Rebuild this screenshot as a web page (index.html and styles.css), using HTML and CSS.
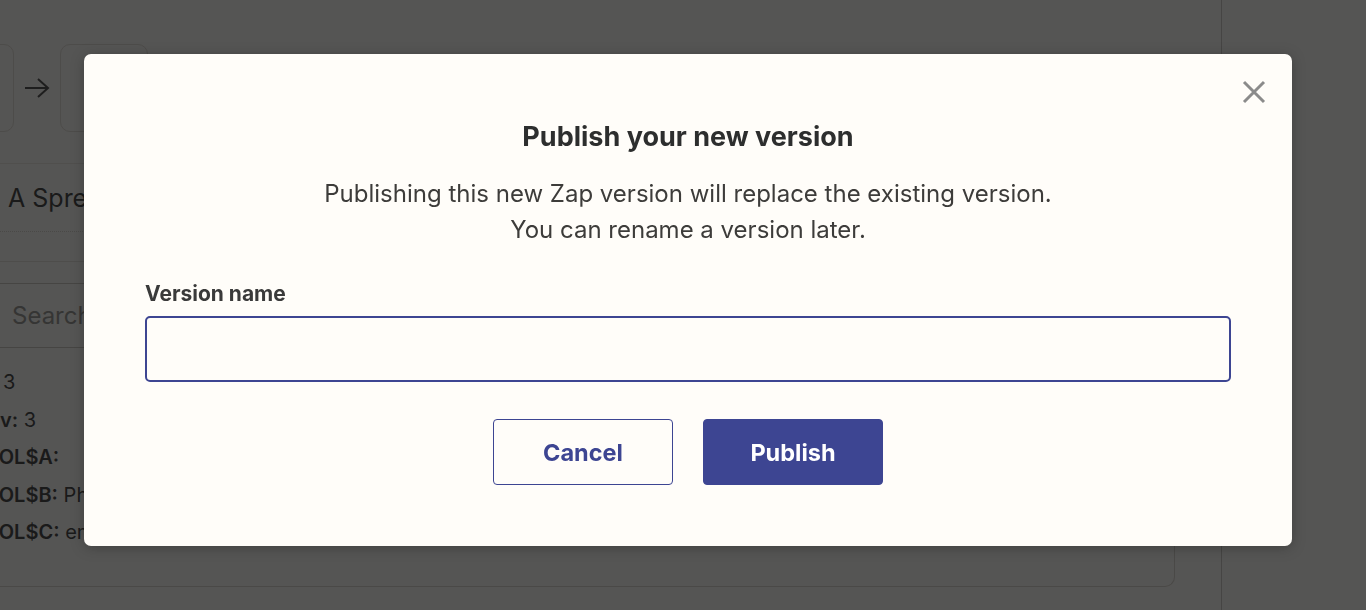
FILE: index.html
```html
<!DOCTYPE html>
<html lang="en">
<head>
<meta charset="utf-8">
<title>Publish your new version</title>
<link rel="stylesheet" href="styles.css">
</head>
<body>
<div class="page">
  <div class="editor">
    <div class="steps">
      <div class="step step-a"></div>
      <svg class="arrow" width="26" height="22" viewBox="0 0 26 22"><path d="M1 11H24M14 2L24 11L14 20" fill="none" stroke="#3a3a3a" stroke-width="2"/></svg>
      <div class="step step-b"></div>
    </div>
    <div class="app-row"><span>A Spreadsheet</span></div>
    <div class="divider"></div>
    <div class="search"><span>Search</span></div>
    <div class="fields">
      <div class="field f1">3</div>
      <div class="field"><b>v:</b> 3</div>
      <div class="field f3"><b>COL$A:</b></div>
      <div class="field f3"><b>COL$B:</b> Phone</div>
      <div class="field f3"><b>COL$C:</b> email</div>
    </div>
  </div>
  <div class="sidebar"></div>
</div>

<div class="overlay"></div>

<div class="modal" role="dialog">
  <button class="close" aria-label="Close">
    <svg width="24" height="24" viewBox="0 0 24 24"><path d="M2 2L22 22M22 2L2 22" stroke="#8b8b8b" stroke-width="3" fill="none"/></svg>
  </button>
  <h1 class="title">Publish your new version</h1>
  <p class="desc">Publishing this new Zap version will replace the existing version.<br>You can rename a version later.</p>
  <label class="label" for="vname">Version name</label>
  <input class="input" id="vname" type="text">
  <div class="actions">
    <button class="btn btn-secondary">Cancel</button>
    <button class="btn btn-primary">Publish</button>
  </div>
</div>
</body>
</html>
```

FILE: styles.css
```css
html, body {
  margin: 0;
  padding: 0;
  height: 100%;
  overflow: hidden;
}
body {
  background: #fffdf9;
  font-family: Inter, "Noto Sans", sans-serif;
  color: #2d2e2e;
}
.page {
  display: flex;
  height: 610px;
}
.editor {
  width: 1221px;
  flex: none;
  border-right: 1px solid #c8c6c0;
  display: flex;
  flex-direction: column;
  overflow: hidden;
}
.sidebar {
  flex: 1;
}
.steps {
  display: flex;
  align-items: center;
  gap: 10px;
  margin-top: 44px;
  margin-left: -60px;
  height: 88px;
}
.step {
  height: 88px;
  border: 1px solid #e0ddd6;
  border-radius: 10px;
  box-sizing: border-box;
}
.step-a { width: 74px; }
.step-b { width: 88px; }
.arrow { flex: none; }
.app-row {
  margin-top: 31px;
  height: 69px;
  border-top: 1px solid #ebe9e3;
  border-bottom: 1px dotted #d8d5ce;
  background: #fffefb;
  display: flex;
  align-items: center;
  font-size: 25px;
  color: #2d2e2e;
  padding-left: 8px;
  box-sizing: border-box;
}
.divider {
  margin-top: 29px;
  border-top: 1px solid #e6e3dc;
}
.search {
  margin-top: 21px;
  height: 65px;
  border-top: 1px solid #c9c6bf;
  border-bottom: 1px solid #c9c6bf;
  box-sizing: border-box;
  display: flex;
  align-items: center;
  padding-left: 12px;
  font-size: 24px;
  color: #8e8c88;
  width: 1170px;
}
.fields {
  margin-top: 16px;
  font-size: 20px;
  line-height: 37.5px;
  color: #2d2e2e;
  border-bottom: 1px solid #d6d3cc;
  border-bottom-right-radius: 10px;
  border-right: 1px solid #d6d3cc;
  width: 1175px;
  height: 223px;
  box-sizing: border-box;
}
.field { white-space: nowrap; }
.field b { font-weight: 600; }
.f1 { padding-left: 3px; }
.f3 { margin-left: -16px; }

.overlay {
  position: fixed;
  inset: 0;
  background: rgba(20, 20, 20, 0.72);
}

.modal {
  position: fixed;
  left: 84px;
  top: 54px;
  width: 1208px;
  height: 492px;
  box-sizing: border-box;
  background: #fffdf9;
  border-radius: 7px;
  box-shadow: 0 2px 14px rgba(0, 0, 0, 0.25);
  padding: 67px 61px 61px;
  display: flex;
  flex-direction: column;
}
.close {
  position: absolute;
  right: 26px;
  top: 26px;
  width: 24px;
  height: 24px;
  padding: 0;
  border: 0;
  background: none;
  display: flex;
}
.title {
  margin: 0;
  font-size: 27px;
  line-height: 32px;
  font-weight: 700;
  text-align: center;
  color: #2d2e2e;
}
.desc {
  margin: 23px 0 0;
  font-size: 24px;
  line-height: 36px;
  text-align: center;
  color: #3d3c3a;
}
.label {
  margin-top: 34px;
  font-size: 21px;
  line-height: 24px;
  font-weight: 700;
  color: #3a3a3a;
}
.input {
  margin-top: 10px;
  height: 66px;
  box-sizing: border-box;
  border: 2px solid #3d4592;
  border-radius: 5px;
  background: #fffdf9;
  font: inherit;
  font-size: 20px;
  padding: 0 14px;
  outline: none;
}
.actions {
  margin-top: 37px;
  display: flex;
  justify-content: center;
  gap: 30px;
}
.btn {
  width: 180px;
  height: 66px;
  box-sizing: border-box;
  border-radius: 4px;
  font-family: Inter, "Noto Sans", sans-serif;
  font-size: 23.5px;
  font-weight: 700;
  cursor: pointer;
}
.btn-secondary {
  background: #fffdf9;
  border: 1px solid #3d4592;
  color: #3d4592;
}
.btn-primary {
  background: #3d4592;
  border: 1px solid #3d4592;
  color: #ffffff;
}
```
